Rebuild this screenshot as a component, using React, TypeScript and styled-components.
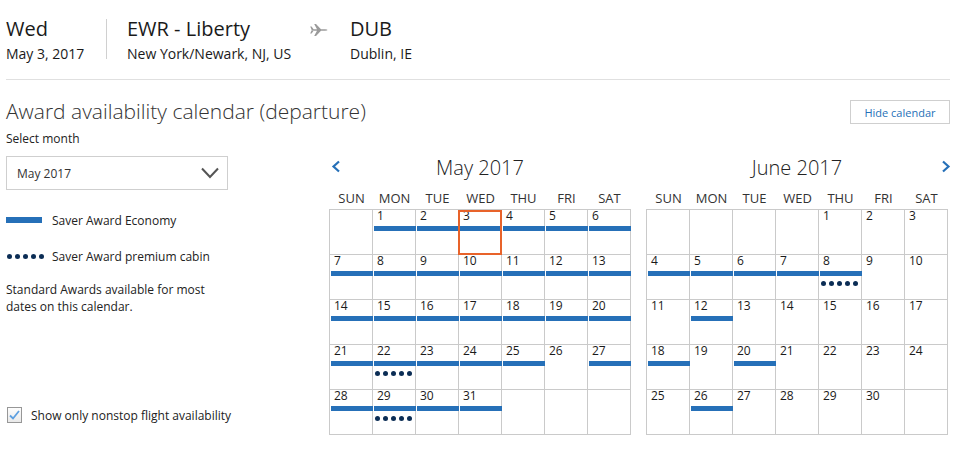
import React from "react";
import styled, { createGlobalStyle } from "styled-components";

const GlobalStyle = createGlobalStyle`
  html, body { margin: 0; padding: 0; background: #fff; }
  body { font-family: "Open Sans", "Liberation Sans", sans-serif; color: #333; }
  * { box-sizing: border-box; }
`;

const BLUE = "#2670b8";
const NAVY = "#0b2d55";
const GRID = "#cacaca";

const Page = styled.div`
  width: 957px;
  padding: 0 7px 0 6px;
`;

const Header = styled.header`
  display: flex;
  align-items: flex-start;
  padding: 17px 0 16px;
  border-bottom: 1px solid #e0e0e0;
`;

const InfoCol = styled.div<{ $w?: number }>`
  display: flex;
  flex-direction: column;
  width: ${(p) => (p.$w ? `${p.$w}px` : "auto")};
`;

const Big = styled.div`
  font-size: 20px;
  line-height: 24px;
  color: #1a1a1a;
`;

const Small = styled.div`
  margin-top: 4px;
  font-size: 14px;
  line-height: 18px;
  color: #1a1a1a;
`;

const VDivider = styled.div`
  width: 1px;
  height: 40px;
  margin: 2px 20px 0 0;
  background: #d0d0d0;
`;

const PlaneWrap = styled.div`
  width: 18px;
  height: 24px;
  margin-right: 22px;
  display: flex;
  align-items: center;
  padding-top: 2px;
`;

const TitleRow = styled.div`
  display: flex;
  align-items: center;
  justify-content: space-between;
  margin-top: 16px;
  height: 30px;
`;

const PageTitle = styled.h1`
  margin: 0;
  font-size: 21px;
  line-height: 30px;
  font-weight: 300;
  color: #333;
`;

const HideButton = styled.button`
  width: 100px;
  height: 24px;
  margin-top: 2px;
  background: #fff;
  border: 1px solid #cfcfcf;
  color: ${BLUE};
  font-family: "Open Sans", "Liberation Sans", sans-serif;
  font-size: 11px;
  padding: 0;
  cursor: pointer;
`;

const Main = styled.div`
  display: flex;
`;

const LeftPanel = styled.div`
  width: 323px;
  padding-top: 5px;
  display: flex;
  flex-direction: column;
`;

const Label = styled.div`
  font-size: 12px;
  line-height: 16px;
  color: #222;
`;

const Select = styled.div`
  margin-top: 9px;
  width: 222px;
  height: 34px;
  border: 1px solid #cfcfcf;
  display: flex;
  align-items: center;
  justify-content: space-between;
  padding: 0 8px 0 10px;
  font-size: 12px;
  color: #333;
`;

const LegendRow = styled.div<{ $mt: number }>`
  display: flex;
  align-items: center;
  height: 16px;
  margin-top: ${(p) => p.$mt}px;
  font-size: 12px;
  color: #222;
`;

const LegendIcon = styled.div`
  width: 46px;
  display: flex;
  align-items: center;
`;

const LegendBar = styled.div`
  width: 36px;
  height: 6px;
  background: ${BLUE};
`;

const Note = styled.p`
  margin: 17px 0 0;
  font-size: 12px;
  line-height: 17px;
  color: #222;
  width: 220px;
`;

const CheckRow = styled.label`
  display: flex;
  align-items: center;
  margin-top: 92px;
  height: 16px;
  font-size: 12px;
  color: #222;
`;

const CheckBox = styled.span`
  width: 15px;
  height: 16px;
  margin-left: 1px;
  margin-right: 9px;
  border: 1px solid #979797;
  background: linear-gradient(#fdfdfd, #e9e9e9);
  display: flex;
  align-items: center;
  justify-content: center;
`;

const Calendars = styled.div`
  display: flex;
  gap: 15px;
  padding-top: 30px;
`;

const Month = styled.div`
  width: 302px;
  display: flex;
  flex-direction: column;
`;

const MonthHeader = styled.div`
  display: grid;
  grid-template-columns: 20px 1fr 20px;
  grid-template-rows: 24px;
  align-items: center;
  height: 24px;
`;

const MonthTitle = styled.div`
  grid-row: 1;
  grid-column: 2;
  text-align: center;
  font-size: 20px;
  line-height: 24px;
  font-weight: 300;
  color: #222;
`;

const NavArrow = styled.span<{ $side: "left" | "right" }>`
  grid-row: 1;
  grid-column: ${(p) => (p.$side === "left" ? 1 : 3)};
  justify-self: ${(p) => (p.$side === "left" ? "start" : "end")};
  margin: -4px ${(p) => (p.$side === "right" ? "-3px" : "0")} 0
    ${(p) => (p.$side === "left" ? "2px" : "0")};
  display: flex;
  cursor: pointer;
`;

const WeekRow = styled.div`
  display: grid;
  grid-template-columns: repeat(7, 43px);
  margin-top: 8px;
  height: 21px;
  padding-left: 1px;
`;

const WeekDay = styled.div`
  text-align: center;
  font-size: 13px;
  line-height: 20px;
  color: #333;
`;

const Grid = styled.div`
  display: grid;
  grid-template-columns: repeat(7, 43px);
  grid-auto-rows: 45px;
  border-top: 1px solid ${GRID};
  border-left: 1px solid ${GRID};
  width: 302px;
`;

const Cell = styled.div`
  position: relative;
  border-right: 1px solid ${GRID};
  border-bottom: 1px solid ${GRID};
`;

const DayNum = styled.div`
  padding-left: 4px;
  font-size: 12px;
  line-height: 12px;
  color: #1a1a1a;
`;

const Bar = styled.div<{ $on: boolean }>`
  position: relative;
  margin: 4px 0 0 1px;
  width: 42px;
  height: 5px;
  background: ${(p) => (p.$on ? BLUE : "transparent")};
`;

const Dots = styled.div<{ $cell?: boolean }>`
  display: flex;
  gap: 3px;
  margin: ${(p) => (p.$cell ? "5px 0 0 2px" : "0 0 0 1px")};
`;

const Dot = styled.span`
  width: 5px;
  height: 5px;
  border-radius: 50%;
  background: ${NAVY};
`;

const Selected = styled.div`
  position: absolute;
  top: 0;
  left: -1px;
  right: -1px;
  bottom: -1px;
  border: 2px solid #e8632a;
  z-index: 2;
`;

type Day = { day?: number; bar?: boolean; dots?: boolean; selected?: boolean };

function buildMonth(
  offset: number,
  days: number,
  bars: (d: number) => boolean,
  dots: number[],
  selected?: number
): Day[] {
  const cells: Day[] = [];
  for (let i = 0; i < offset; i++) cells.push({});
  for (let d = 1; d <= days; d++)
    cells.push({ day: d, bar: bars(d), dots: dots.includes(d), selected: d === selected });
  while (cells.length % 7 !== 0) cells.push({});
  return cells;
}

const MAY = buildMonth(1, 31, (d) => d !== 26, [22, 29], 3);
const JUNE_BARS = [4, 5, 6, 7, 8, 12, 18, 20, 26];
const JUNE = buildMonth(4, 30, (d) => JUNE_BARS.includes(d), [8]);

const WEEK = ["SUN", "MON", "TUE", "WED", "THU", "FRI", "SAT"];

const FiveDots = ({ cell }: { cell?: boolean }) => (
  <Dots $cell={cell}>
    {[0, 1, 2, 3, 4].map((i) => (
      <Dot key={i} />
    ))}
  </Dots>
);

const Chevron = ({ dir }: { dir: "left" | "right" }) => (
  <svg width="10" height="13" viewBox="0 0 10 13">
    <polyline
      points={dir === "left" ? "8,1.5 2.5,6.5 8,11.5" : "2,1.5 7.5,6.5 2,11.5"}
      fill="none"
      stroke={BLUE}
      strokeWidth="2.2"
    />
  </svg>
);

const Plane = () => (
  <svg width="18" height="12" viewBox="0 0 18 12">
    <path
      d="M1.5 5.2 H15 Q17.5 5.2 17.5 6 Q17.5 6.8 15 6.8 H1.5 Z
         M7 5.2 L4.2 0 H6 L11 5.2 Z
         M7 6.8 L4.2 12 H6 L11 6.8 Z
         M1.5 5.4 L0.2 2.6 H1.6 L3.8 5.4 Z
         M1.5 6.6 L0.2 9.4 H1.6 L3.8 6.6 Z"
      fill="#9a9a9a"
    />
  </svg>
);

const MonthView = ({
  title,
  cells,
  nav,
}: {
  title: string;
  cells: Day[];
  nav: "left" | "right";
}) => (
  <Month>
    <MonthHeader>
      <NavArrow $side={nav}>
        <Chevron dir={nav} />
      </NavArrow>
      <MonthTitle>{title}</MonthTitle>
    </MonthHeader>
    <WeekRow>
      {WEEK.map((w) => (
        <WeekDay key={w}>{w}</WeekDay>
      ))}
    </WeekRow>
    <Grid>
      {cells.map((c, i) => (
        <Cell key={i}>
          {c.day !== undefined && (
            <>
              <DayNum>{c.day}</DayNum>
              <Bar $on={!!c.bar} />
              {c.dots && <FiveDots cell />}
              {c.selected && <Selected />}
            </>
          )}
        </Cell>
      ))}
    </Grid>
  </Month>
);

export default function App() {
  return (
    <Page>
      <GlobalStyle />
      <Header>
        <InfoCol $w={100}>
          <Big>Wed</Big>
          <Small>May 3, 2017</Small>
        </InfoCol>
        <VDivider />
        <InfoCol $w={183}>
          <Big>EWR - Liberty</Big>
          <Small>New York/Newark, NJ, US</Small>
        </InfoCol>
        <PlaneWrap>
          <Plane />
        </PlaneWrap>
        <InfoCol>
          <Big>DUB</Big>
          <Small>Dublin, IE</Small>
        </InfoCol>
      </Header>

      <TitleRow>
        <PageTitle>Award availability calendar (departure)</PageTitle>
        <HideButton>Hide calendar</HideButton>
      </TitleRow>

      <Main>
        <LeftPanel>
          <Label>Select month</Label>
          <Select>
            <span>May 2017</span>
            <svg width="18" height="12" viewBox="0 0 18 12">
              <polyline points="1,1.5 9,10 17,1.5" fill="none" stroke="#555" strokeWidth="2" />
            </svg>
          </Select>
          <LegendRow $mt={22}>
            <LegendIcon>
              <LegendBar />
            </LegendIcon>
            Saver Award Economy
          </LegendRow>
          <LegendRow $mt={20}>
            <LegendIcon>
              <FiveDots />
            </LegendIcon>
            Saver Award premium cabin
          </LegendRow>
          <Note>Standard Awards available for most dates on this calendar.</Note>
          <CheckRow>
            <CheckBox>
              <svg width="11" height="10" viewBox="0 0 11 10">
                <polyline
                  points="1,5.5 4,8.5 10,1"
                  fill="none"
                  stroke="#5d9fe0"
                  strokeWidth="1.8"
                />
              </svg>
            </CheckBox>
            Show only nonstop flight availability
          </CheckRow>
        </LeftPanel>
        <Calendars>
          <MonthView title="May 2017" cells={MAY} nav="left" />
          <MonthView title="June 2017" cells={JUNE} nav="right" />
        </Calendars>
      </Main>
    </Page>
  );
}
